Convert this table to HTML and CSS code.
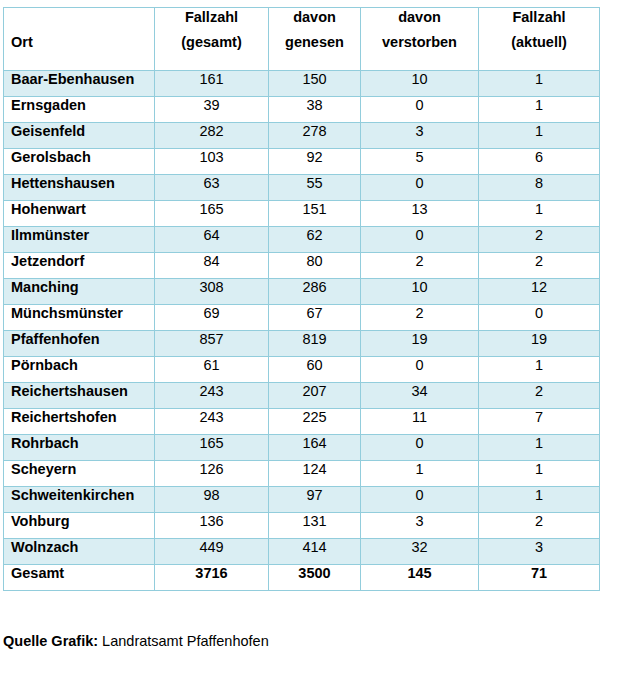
FILE: index.html
```html
<!DOCTYPE html>
<html lang="de">
<head>
<meta charset="utf-8">
<title>Fallzahlen Landkreis Pfaffenhofen</title>
<link rel="stylesheet" href="styles.css">
</head>
<body>
<table class="cases">
  <colgroup>
    <col class="c-ort">
    <col class="c-ges">
    <col class="c-gen">
    <col class="c-ver">
    <col class="c-akt">
  </colgroup>
  <thead>
    <tr>
      <th class="name ort">Ort</th>
      <th><span class="ln">Fallzahl</span><span class="ln">(gesamt)</span></th>
      <th><span class="ln">davon</span><span class="ln">genesen</span></th>
      <th><span class="ln">davon</span><span class="ln">verstorben</span></th>
      <th><span class="ln">Fallzahl</span><span class="ln">(aktuell)</span></th>
    </tr>
  </thead>
  <tbody>
    <tr class="band"><td class="name">Baar-Ebenhausen</td><td>161</td><td>150</td><td>10</td><td>1</td></tr>
    <tr><td class="name">Ernsgaden</td><td>39</td><td>38</td><td>0</td><td>1</td></tr>
    <tr class="band"><td class="name">Geisenfeld</td><td>282</td><td>278</td><td>3</td><td>1</td></tr>
    <tr><td class="name">Gerolsbach</td><td>103</td><td>92</td><td>5</td><td>6</td></tr>
    <tr class="band"><td class="name">Hettenshausen</td><td>63</td><td>55</td><td>0</td><td>8</td></tr>
    <tr><td class="name">Hohenwart</td><td>165</td><td>151</td><td>13</td><td>1</td></tr>
    <tr class="band"><td class="name">Ilmmünster</td><td>64</td><td>62</td><td>0</td><td>2</td></tr>
    <tr><td class="name">Jetzendorf</td><td>84</td><td>80</td><td>2</td><td>2</td></tr>
    <tr class="band"><td class="name">Manching</td><td>308</td><td>286</td><td>10</td><td>12</td></tr>
    <tr><td class="name">Münchsmünster</td><td>69</td><td>67</td><td>2</td><td>0</td></tr>
    <tr class="band"><td class="name">Pfaffenhofen</td><td>857</td><td>819</td><td>19</td><td>19</td></tr>
    <tr><td class="name">Pörnbach</td><td>61</td><td>60</td><td>0</td><td>1</td></tr>
    <tr class="band"><td class="name">Reichertshausen</td><td>243</td><td>207</td><td>34</td><td>2</td></tr>
    <tr><td class="name">Reichertshofen</td><td>243</td><td>225</td><td>11</td><td>7</td></tr>
    <tr class="band"><td class="name">Rohrbach</td><td>165</td><td>164</td><td>0</td><td>1</td></tr>
    <tr><td class="name">Scheyern</td><td>126</td><td>124</td><td>1</td><td>1</td></tr>
    <tr class="band"><td class="name">Schweitenkirchen</td><td>98</td><td>97</td><td>0</td><td>1</td></tr>
    <tr><td class="name">Vohburg</td><td>136</td><td>131</td><td>3</td><td>2</td></tr>
    <tr class="band"><td class="name">Wolnzach</td><td>449</td><td>414</td><td>32</td><td>3</td></tr>
    <tr class="total"><td class="name">Gesamt</td><td>3716</td><td>3500</td><td>145</td><td>71</td></tr>
  </tbody>
</table>
<p class="source"><strong>Quelle Grafik:</strong> Landratsamt Pfaffenhofen</p>
</body>
</html>
```
FILE: styles.css
```css
html, body {
  margin: 0;
  padding: 0;
  background: #ffffff;
}

body {
  font-family: "Liberation Sans", Arial, sans-serif;
  font-size: 14.5px;
  color: #000000;
  padding: 7px 0 0 3px;
}

.cases {
  border-collapse: collapse;
  table-layout: fixed;
  width: 597px;
}

.c-ort { width: 151px; }
.c-ges { width: 114px; }
.c-gen { width: 92px; }
.c-ver { width: 118px; }
.c-akt { width: 121px; }

.cases th,
.cases td {
  border: 1px solid #92cddc;
  line-height: 17px;
  text-align: center;
  vertical-align: top;
}

.cases th {
  font-weight: bold;
  padding: 1px 7px 19px;
}

.cases th .ln {
  display: block;
}

.cases th .ln + .ln {
  margin-top: 8px;
}

.cases th.ort {
  padding-top: 26px;
}

.cases td {
  padding: 0 7px 8px;
}

.cases .name {
  text-align: left;
  font-weight: bold;
}

.cases tr.band td {
  background: #daeef3;
}

.cases tr.total td {
  font-weight: bold;
}

.source {
  margin: 42px 0 0;
  line-height: 17px;
}
```
